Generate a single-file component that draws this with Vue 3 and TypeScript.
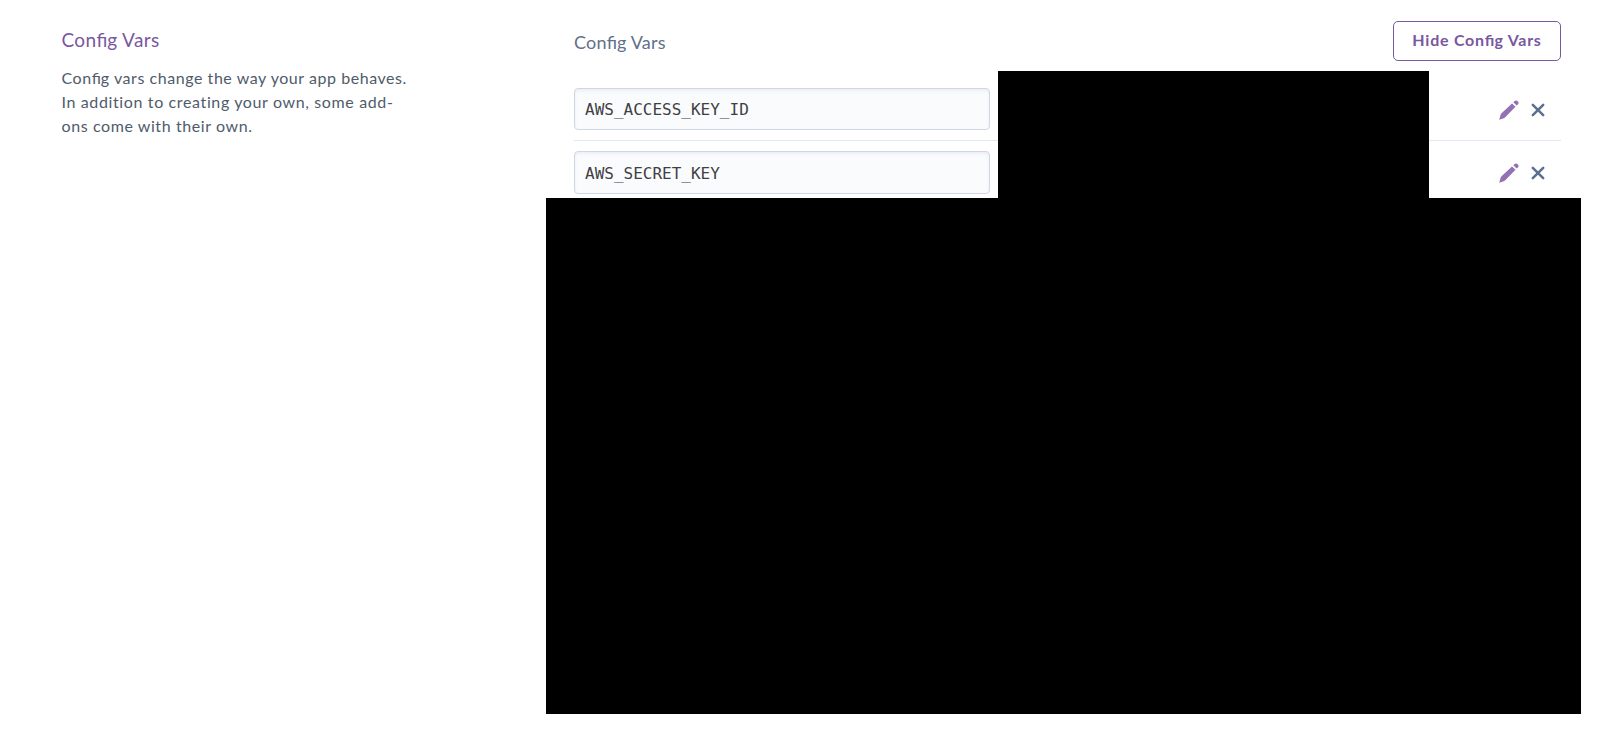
<script setup lang="ts">
interface ConfigVar {
  key: string
}

const vars: ConfigVar[] = [{ key: 'AWS_ACCESS_KEY_ID' }, { key: 'AWS_SECRET_KEY' }]
</script>

<template>
  <main class="page">
    <aside class="intro">
      <h2>Con<span class="lig">fi</span>g Vars</h2>
      <p>
        <span class="line l1">Con<span class="lig">fi</span>g vars change the way your app behaves.</span>
        <span class="line l2">In addition to creating your own, some add-</span>
        <span class="line l3">ons come with their own.</span>
      </p>
    </aside>
    <section class="panel">
      <header class="head">
        <h3>Con<span class="lig">fi</span>g Vars</h3>
        <button class="toggle" type="button">Hide Con<span class="lig">fi</span>g Vars</button>
      </header>
      <div v-for="v in vars" :key="v.key" class="row">
        <div class="field">{{ v.key }}</div>
        <div class="actions">
          <svg class="pencil" width="20" height="20" viewBox="0 0 20 20">
            <path d="M0.2 19.8 L1.6 14.8 Q2 13.8 2.8 13 L13 3.4 L16.5 6.8 L6.5 16.9 Q5.6 17.8 4.8 18.2 Z" />
            <path d="M14.3 2.3 L15.4 1.2 Q17 -0.2 18.8 1.3 Q20.3 3 18.8 4.5 L17.7 5.6 Z" />
          </svg>
          <svg class="remove" width="14" height="14" viewBox="0 0 14 14">
            <path d="M1.8 1.8 L12.2 12.2 M12.2 1.8 L1.8 12.2" />
          </svg>
        </div>
      </div>
      <div class="mask values"></div>
      <div class="mask rest"></div>
    </section>
  </main>
</template>

<style>
body {
  margin: 0;
  background: #fff;
}
</style>

<style scoped>
.page {
  box-sizing: border-box;
  position: relative;
  display: flex;
  height: 740px;
  padding: 21px 46px 0 61px;
  font-family: Lato, "Open Sans", sans-serif;
  overflow: hidden;
}
.lig {
  letter-spacing: 0;
}
.intro {
  box-sizing: border-box;
  width: 513px;
  padding-left: 0.5px;
  flex: none;
}
h2 {
  margin: 6px 0 0;
  font-size: 19px;
  line-height: 26px;
  font-weight: 400;
  color: #79589f;
  letter-spacing: 0.35px;
}
p {
  margin: 13px 0 0;
  font-size: 16px;
  line-height: 24px;
  color: #4f5b6b;
}
.line {
  display: block;
  width: max-content;
}
.l1 {
  letter-spacing: 0.55px;
}
.l2 {
  letter-spacing: 0.63px;
}
.l3 {
  letter-spacing: 0.59px;
}
.panel {
  width: 987px;
  flex: none;
}
.head {
  display: flex;
  justify-content: space-between;
  height: 57px;
}
h3 {
  margin: 8px 0 0;
  font-size: 18px;
  line-height: 26px;
  font-weight: 400;
  color: #62708a;
  letter-spacing: 0.2px;
}
.toggle {
  box-sizing: border-box;
  width: 168px;
  height: 40px;
  padding: 0 0 2px;
  border: 1px solid #79589f;
  border-radius: 5px;
  background: #fff;
  color: #79589f;
  font: 700 16px/36px Lato, sans-serif;
  letter-spacing: 0.75px;
}
.row {
  box-sizing: border-box;
  display: flex;
  align-items: center;
  justify-content: space-between;
  height: 63px;
  padding-right: 16px;
  border-bottom: 1px solid #e3e7f3;
}
.row + .row {
  height: 64px;
}
.field {
  box-sizing: border-box;
  width: 416px;
  height: 42px;
  padding-left: 10px;
  border: 1px solid #cfd7e6;
  border-radius: 4px;
  background: #fafbfd;
  box-shadow: inset 0 2px 3px rgba(207, 215, 230, 0.35);
  font: 16px/41px "DejaVu Sans Mono", monospace;
  color: #3f3f44;
}
.row + .row .field {
  height: 43px;
  line-height: 43px;
}
.actions {
  display: flex;
  align-items: center;
  gap: 12px;
  padding-top: 1px;
}
.pencil {
  fill: #9470b5;
}
.remove {
  fill: none;
  stroke: #5c708d;
  stroke-width: 2.5;
  stroke-linecap: round;
}
.mask {
  position: absolute;
  background: #000;
}
.values {
  left: 998px;
  top: 71px;
  width: 431px;
  height: 127px;
}
.rest {
  left: 546px;
  top: 198px;
  width: 1035px;
  height: 516px;
}
</style>
